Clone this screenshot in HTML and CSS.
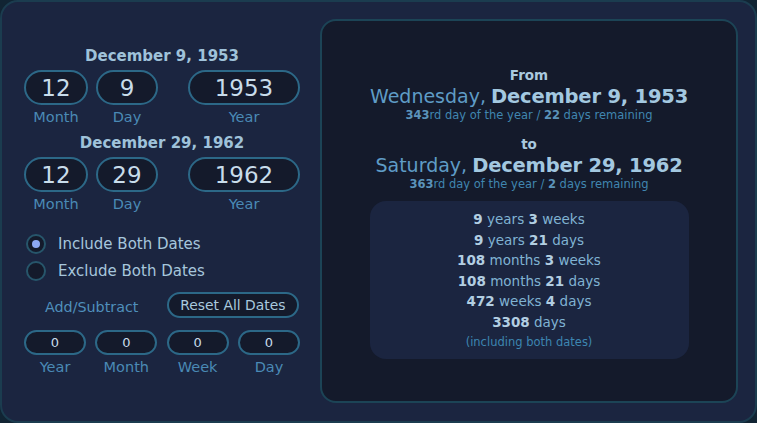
FILE: index.html
```html
<!DOCTYPE html>
<html>
<head>
<meta charset="utf-8">
<link rel="stylesheet" href="styles.css">
</head>
<body>
<div class="card">
  <div class="left">
    <div class="date-block first">
      <div class="date-title">December 9, 1953</div>
      <div class="field-row">
        <div class="field month"><div class="box big">12</div><div class="lbl">Month</div></div>
        <div class="field day"><div class="box big">9</div><div class="lbl">Day</div></div>
        <div class="field year"><div class="box big">1953</div><div class="lbl">Year</div></div>
      </div>
    </div>
    <div class="date-block second">
      <div class="date-title">December 29, 1962</div>
      <div class="field-row">
        <div class="field month"><div class="box big">12</div><div class="lbl">Month</div></div>
        <div class="field day"><div class="box big">29</div><div class="lbl">Day</div></div>
        <div class="field year"><div class="box big">1962</div><div class="lbl">Year</div></div>
      </div>
    </div>
    <div class="radios">
      <div class="radio-row"><span class="radio checked"></span><span class="radio-lbl">Include Both Dates</span></div>
      <div class="radio-row"><span class="radio"></span><span class="radio-lbl">Exclude Both Dates</span></div>
    </div>
    <div class="adjust">
      <div class="adjust-title">Add/Subtract</div>
      <div class="reset">Reset All Dates</div>
      <div class="field"><div class="box small">0</div><div class="lbl">Year</div></div>
      <div class="field"><div class="box small">0</div><div class="lbl">Month</div></div>
      <div class="field"><div class="box small">0</div><div class="lbl">Week</div></div>
      <div class="field"><div class="box small">0</div><div class="lbl">Day</div></div>
    </div>
  </div>
  <div class="panel">
    <div class="word">From</div>
    <div class="main"><span class="dow">Wednesday,</span> <b>December 9, 1953</b></div>
    <div class="sub"><b>343</b>rd day of the year / <b>22</b> days remaining</div>
    <div class="word to">to</div>
    <div class="main"><span class="dow">Saturday,</span> <b>December 29, 1962</b></div>
    <div class="sub"><b>363</b>rd day of the year / <b>2</b> days remaining</div>
    <div class="results">
      <div><b>9</b> years <b>3</b> weeks</div>
      <div><b>9</b> years <b>21</b> days</div>
      <div><b>108</b> months <b>3</b> weeks</div>
      <div><b>108</b> months <b>21</b> days</div>
      <div><b>472</b> weeks <b>4</b> days</div>
      <div><b>3308</b> days</div>
      <div class="note">(including both dates)</div>
    </div>
  </div>
</div>
</body>
</html>
```
FILE: styles.css
```css
* { box-sizing: border-box; }
html, body { margin: 0; padding: 0; }
body {
  background: #112433;
  font-family: "DejaVu Sans", "Noto Sans", sans-serif;
  width: 757px;
  height: 423px;
  overflow: hidden;
}
.card {
  width: 757px;
  height: 423px;
  border: 2px solid #1b3c4f;
  border-radius: 18px;
  background: #1b2540;
  display: grid;
  grid-template-columns: 276px 418px;
  column-gap: 20px;
  padding: 17px 17px 18px 22px;
}
.left {
  display: flex;
  flex-direction: column;
}
.date-block.first { margin-top: 28px; }
.date-block.second { margin-top: 9px; }
.date-title {
  text-align: center;
  font-size: 15px;
  font-weight: bold;
  line-height: 18px;
  color: #9fc2da;
  margin-bottom: 5px;
}
.field-row {
  display: flex;
}
.field { display: flex; flex-direction: column; align-items: stretch; }
.field.month { width: 64px; margin-right: 8px; }
.field.day { width: 62px; }
.field.year { width: 112px; margin-left: auto; }
.box {
  background: #141a2b;
  border: 2px solid #2c6887;
  border-radius: 18px;
  color: #c8dcea;
  text-align: center;
  display: flex;
  align-items: center;
  justify-content: center;
}
.box.big { height: 35px; font-size: 23px; }
.box.small { height: 25px; font-size: 13px; border-radius: 13px; }
.lbl {
  text-align: center;
  font-size: 14.5px;
  line-height: 16px;
  color: #4a8ab5;
  margin-top: 4px;
}
.radios {
  margin-top: 22px;
  display: flex;
  flex-direction: column;
  gap: 7px;
}
.radio-row {
  display: flex;
  align-items: center;
  height: 20px;
  padding-left: 2px;
}
.radio {
  width: 20px;
  height: 20px;
  border-radius: 50%;
  border: 2px solid #27566b;
  background: #141a2b;
  display: flex;
  align-items: center;
  justify-content: center;
  margin-right: 12px;
  flex: none;
}
.radio.checked::after {
  content: "";
  width: 8px;
  height: 8px;
  border-radius: 50%;
  background: #8da8f4;
}
.radio-lbl {
  font-size: 15px;
  color: #a6c6dc;
}
.adjust {
  margin-top: 11px;
  display: grid;
  grid-template-columns: repeat(4, 62px);
  justify-content: space-between;
  row-gap: 12px;
}
.adjust-title {
  grid-column: 1 / 3;
  text-align: center;
  align-self: center;
  font-size: 14.3px;
  color: #4f8fbb;
  padding-top: 3px;
  padding-left: 2px;
}
.reset {
  grid-column: 3 / 5;
  justify-self: stretch;
  height: 26px;
  border: 2px solid #2c6887;
  border-radius: 14px;
  background: #141a2b;
  color: #a9c9de;
  font-size: 13.9px;
  display: flex;
  align-items: center;
  justify-content: center;
  margin-right: 1px;
}
.panel {
  height: 384px;
  border: 2px solid #1c4456;
  border-radius: 16px;
  background: #141a2b;
  padding-top: 45px;
  display: flex;
  flex-direction: column;
  align-items: center;
  text-align: center;
}
.word {
  font-size: 13.5px;
  font-weight: bold;
  line-height: 18px;
  color: #a9c9df;
}
.word.to { margin-top: 13px; }
.main {
  line-height: 22px;
  color: #a3c8e0;
  white-space: nowrap;
  margin-top: 1px;
}
.main .dow {
  font-size: 19px;
  color: #5f9cc6;
  font-weight: normal;
}
.main b { font-size: 19.5px; font-weight: bold; letter-spacing: -0.2px; }
.sub {
  font-size: 11.5px;
  line-height: 14px;
  color: #4086b0;
  margin-top: -1px;
}
.sub b { color: #5b93ba; }
.results {
  margin-top: 10px;
  width: 319px;
  height: 158px;
  background: #1b2540;
  border-radius: 16px;
  padding-top: 8px;
  font-size: 13.5px;
  line-height: 20.5px;
  color: #80b3d3;
}
.results b { color: #b2cee2; }
.results .note {
  font-size: 11.5px;
  color: #3d86b1;
}
```
